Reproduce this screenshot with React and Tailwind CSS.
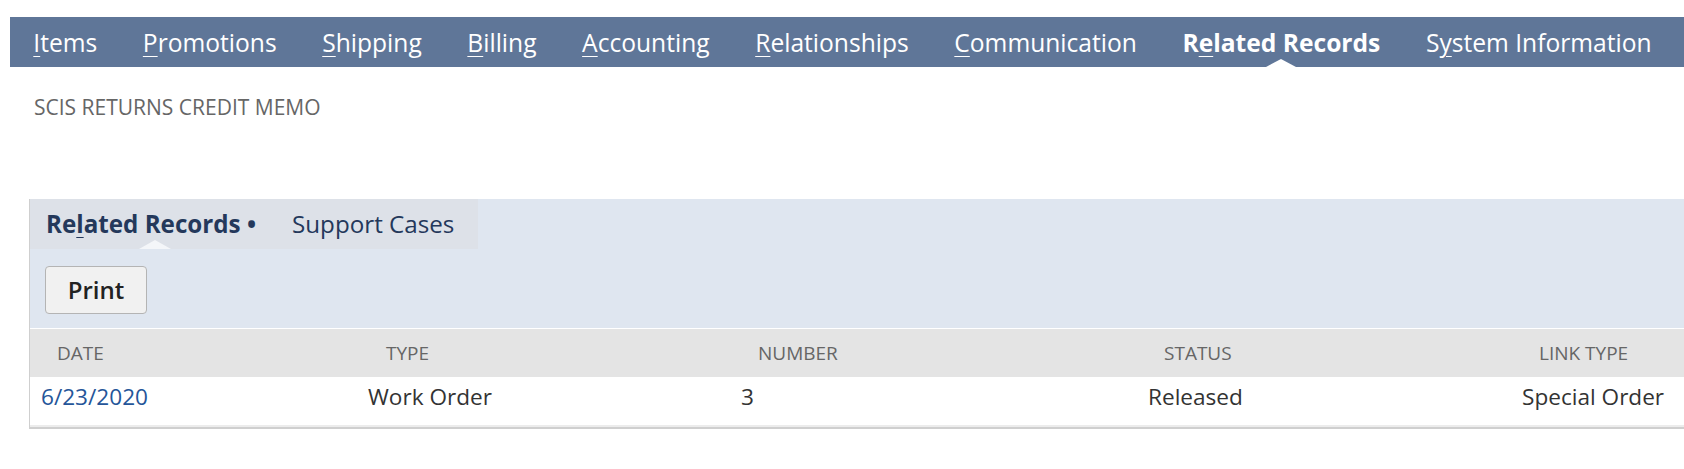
import React from 'react';

const navTabs = [
  { key: 'I', rest: 'tems' },
  { key: 'P', rest: 'romotions' },
  { key: 'S', rest: 'hipping' },
  { key: 'B', rest: 'illing' },
  { key: 'A', rest: 'ccounting' },
  { key: 'R', rest: 'elationships' },
  { key: 'C', rest: 'ommunication' },
  { pre: 'R', key: 'e', rest: 'lated Records', active: true },
  { pre: 'S', key: 'y', rest: 'stem Information' },
];

const rows = [
  { date: '6/23/2020', type: 'Work Order', number: '3', status: 'Released', link: 'Special Order' },
];

function NavTab({ tab }) {
  return (
    <div className="relative flex h-full shrink-0 items-center whitespace-nowrap px-[22.8px] pt-[2px]">
      <span className={tab.active ? 'font-bold' : ''}>
        {tab.pre}
        <u className="underline decoration-1 underline-offset-[4px]">{tab.key}</u>
        {tab.rest}
      </span>
      {tab.active && (
        <span className="absolute bottom-0 left-1/2 h-0 w-0 -translate-x-1/2 border-x-[15px] border-b-[8px] border-x-transparent border-b-white" />
      )}
    </div>
  );
}

export default function App() {
  return (
    <div className="min-h-[469px] overflow-hidden bg-white pt-[17px] font-['Open_Sans',sans-serif]">
      {/* Main tabs */}
      <div className="ml-[10px] flex h-[50px] items-center overflow-hidden bg-[#5f7698] pl-[0.5px] text-[24.6px] leading-none text-white">
        {navTabs.map((t, i) => (
          <NavTab key={i} tab={t} />
        ))}
      </div>

      {/* Form title */}
      <div className="ml-[34px] mt-[27px] text-[21px] leading-[27px] text-[#666]">SCIS RETURNS CREDIT MEMO</div>

      {/* Subtab panel */}
      <div className="ml-[29px] mt-[78px] border-b-2 border-l border-[#cfcfcf] bg-[#dfe6f0]">
        <div className="flex h-[50px]">
          <div className="flex w-[448px] items-center whitespace-nowrap bg-[#dde1e8] pl-[16px] text-[24.2px] text-[#24385b]">
            <div className="relative flex h-full items-center pr-[8px]">
              <span className="font-bold">
                Re<u className="underline decoration-1 underline-offset-[4px]">l</u>ated Records •
              </span>
              <span className="absolute bottom-0 left-1/2 h-0 w-0 -translate-x-1/2 border-x-[16px] border-b-[9px] border-x-transparent border-b-[#f4f6f9]" />
            </div>
            <span className="ml-[28px]">Support Cases</span>
          </div>
        </div>

        <div className="pb-[14px] pl-[15px] pt-[17px]">
          <button className="h-[48px] w-[102px] rounded-[4px] border border-[#b4b4b4] bg-[#f1f1f1] text-[24px] font-semibold text-[#222]">
            Print
          </button>
        </div>

        {/* Table */}
        <div className="border-t border-white bg-white">
          <div className="grid h-[48px] grid-cols-[327px_373px_407px_374px_1fr] items-center bg-[#e4e4e4] text-[19px] uppercase text-[#666]">
            <div className="pl-[27px]">Date</div>
            <div className="pl-[29px]">Type</div>
            <div className="pl-[28px]">Number</div>
            <div className="pl-[27px]">Status</div>
            <div className="pl-[28px]">Link Type</div>
          </div>
          {rows.map((r, i) => (
            <div
              key={i}
              className="mt-[2px] grid h-[48px] grid-cols-[327px_373px_407px_374px_1fr] items-start border-b-2 border-[#ececec] pt-[1px] text-[22.6px] text-[#333]"
            >
              <div className="pl-[11px] text-[#255599]">{r.date}</div>
              <div className="pl-[11px]">{r.type}</div>
              <div className="pl-[11px]">{r.number}</div>
              <div className="pl-[11px]">{r.status}</div>
              <div className="pl-[11px]">{r.link}</div>
            </div>
          ))}
        </div>
      </div>
    </div>
  );
}
